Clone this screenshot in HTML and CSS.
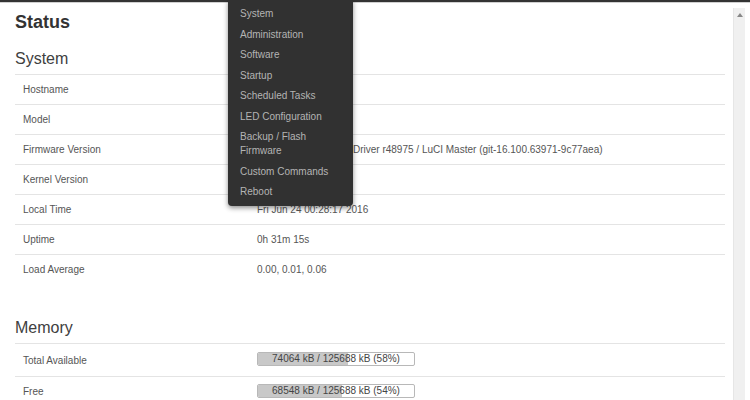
FILE: index.html
```html
<!DOCTYPE html>
<html>
<head>
<meta charset="utf-8">
<link rel="stylesheet" href="styles.css">
</head>
<body>
<div class="topbar"></div>
<div class="frame">
  <main class="content">
    <h1 class="title">Status</h1>
    <h2 class="section-title">System</h2>
    <div class="table">
      <div class="row"><div class="label">Hostname</div><div class="value">OpenWrt</div></div>
      <div class="row"><div class="label">Model</div><div class="value">TL-WR841N v9</div></div>
      <div class="row"><div class="label">Firmware Version</div><div class="value">OpenWrt Designated Driver r48975 / LuCI Master (git-16.100.63971-9c77aea)</div></div>
      <div class="row"><div class="label">Kernel Version</div><div class="value">4.4.13</div></div>
      <div class="row"><div class="label">Local Time</div><div class="value">Fri Jun 24 00:28:17 2016</div></div>
      <div class="row"><div class="label">Uptime</div><div class="value">0h 31m 15s</div></div>
      <div class="row"><div class="label">Load Average</div><div class="value">0.00, 0.01, 0.06</div></div>
    </div>
    <h2 class="section-title memory">Memory</h2>
    <div class="table">
      <div class="row tall"><div class="label">Total Available</div><div class="value"><div class="bar"><div class="fill" style="width:58%"></div><span class="bar-text">74064 kB / 125688 kB (58%)</span></div></div></div>
      <div class="row tall"><div class="label">Free</div><div class="value"><div class="bar"><div class="fill" style="width:54%"></div><span class="bar-text">68548 kB / 125688 kB (54%)</span></div></div></div>
    </div>
  </main>
  <div class="scrollbar"><div class="arrow"></div></div>
</div>
<nav class="menu">
  <a class="item">System</a>
  <a class="item">Administration</a>
  <a class="item">Software</a>
  <a class="item">Startup</a>
  <a class="item">Scheduled Tasks</a>
  <a class="item">LED Configuration</a>
  <a class="item">Backup / Flash Firmware</a>
  <a class="item">Custom Commands</a>
  <a class="item">Reboot</a>
</nav>
</body>
</html>
```
FILE: styles.css
```css
html, body {
  margin: 0;
  padding: 0;
  height: 400px;
  overflow: hidden;
  background: #fff;
  font-family: "Liberation Sans", Arial, sans-serif;
  color: #555;
}
.topbar {
  height: 2px;
  background: #333;
  border-bottom: 1px solid #d0d0d0;
}
.frame {
  display: flex;
  height: 397px;
}
.content {
  flex: 1;
  padding: 0 8px 0 15px;
  min-width: 0;
}
.title {
  margin: 8px 0 0;
  font-size: 18px;
  line-height: 22px;
  font-weight: bold;
  color: #333;
}
.section-title {
  margin: 16px 0 5px;
  font-size: 16px;
  line-height: 20px;
  font-weight: normal;
  color: #404040;
}
.section-title.memory {
  margin-top: 34px;
}
.row {
  display: grid;
  grid-template-columns: 234px 1fr;
  align-items: center;
  box-sizing: border-box;
  height: 30px;
  padding-left: 8px;
  border-top: 1px solid #e4e4e4;
  font-size: 10px;
  line-height: 13px;
  white-space: nowrap;
}
.row.tall {
  height: 33px;
}
.row.tall + .row.tall {
  padding-bottom: 3px;
}
.bar {
  position: relative;
  width: 158px;
  height: 14px;
  box-sizing: border-box;
  border: 1px solid #b8b8b8;
  border-radius: 2px;
  background: #fff;
  overflow: hidden;
  margin-top: -2px;
}
.fill {
  height: 100%;
  background: #c8c8c8;
}
.bar-text {
  position: absolute;
  left: 0;
  right: 0;
  top: 0;
  text-align: center;
  font-size: 10px;
  line-height: 12px;
  color: #444;
}
.scrollbar {
  width: 12px;
  margin: 5px 5px 0 0;
  background: #f0f0f0;
  border-left: 1px solid #e6e6e6;
  display: flex;
  justify-content: center;
  padding-top: 5px;
  box-sizing: border-box;
}
.arrow {
  width: 0;
  height: 0;
  border-left: 3px solid transparent;
  border-right: 3px solid transparent;
  border-bottom: 4px solid #888;
}
.menu {
  position: absolute;
  top: 0;
  left: 228px;
  width: 125px;
  box-sizing: border-box;
  padding: 4px 12px 3px 12px;
  background: #313131;
  border-radius: 0 0 4px 4px;
  box-shadow: 0 2px 5px rgba(0, 0, 0, 0.45);
  display: flex;
  flex-direction: column;
}
.item {
  display: block;
  padding: 3.25px 0;
  font-size: 10px;
  line-height: 14px;
  color: #b4b4b4;
}
```
